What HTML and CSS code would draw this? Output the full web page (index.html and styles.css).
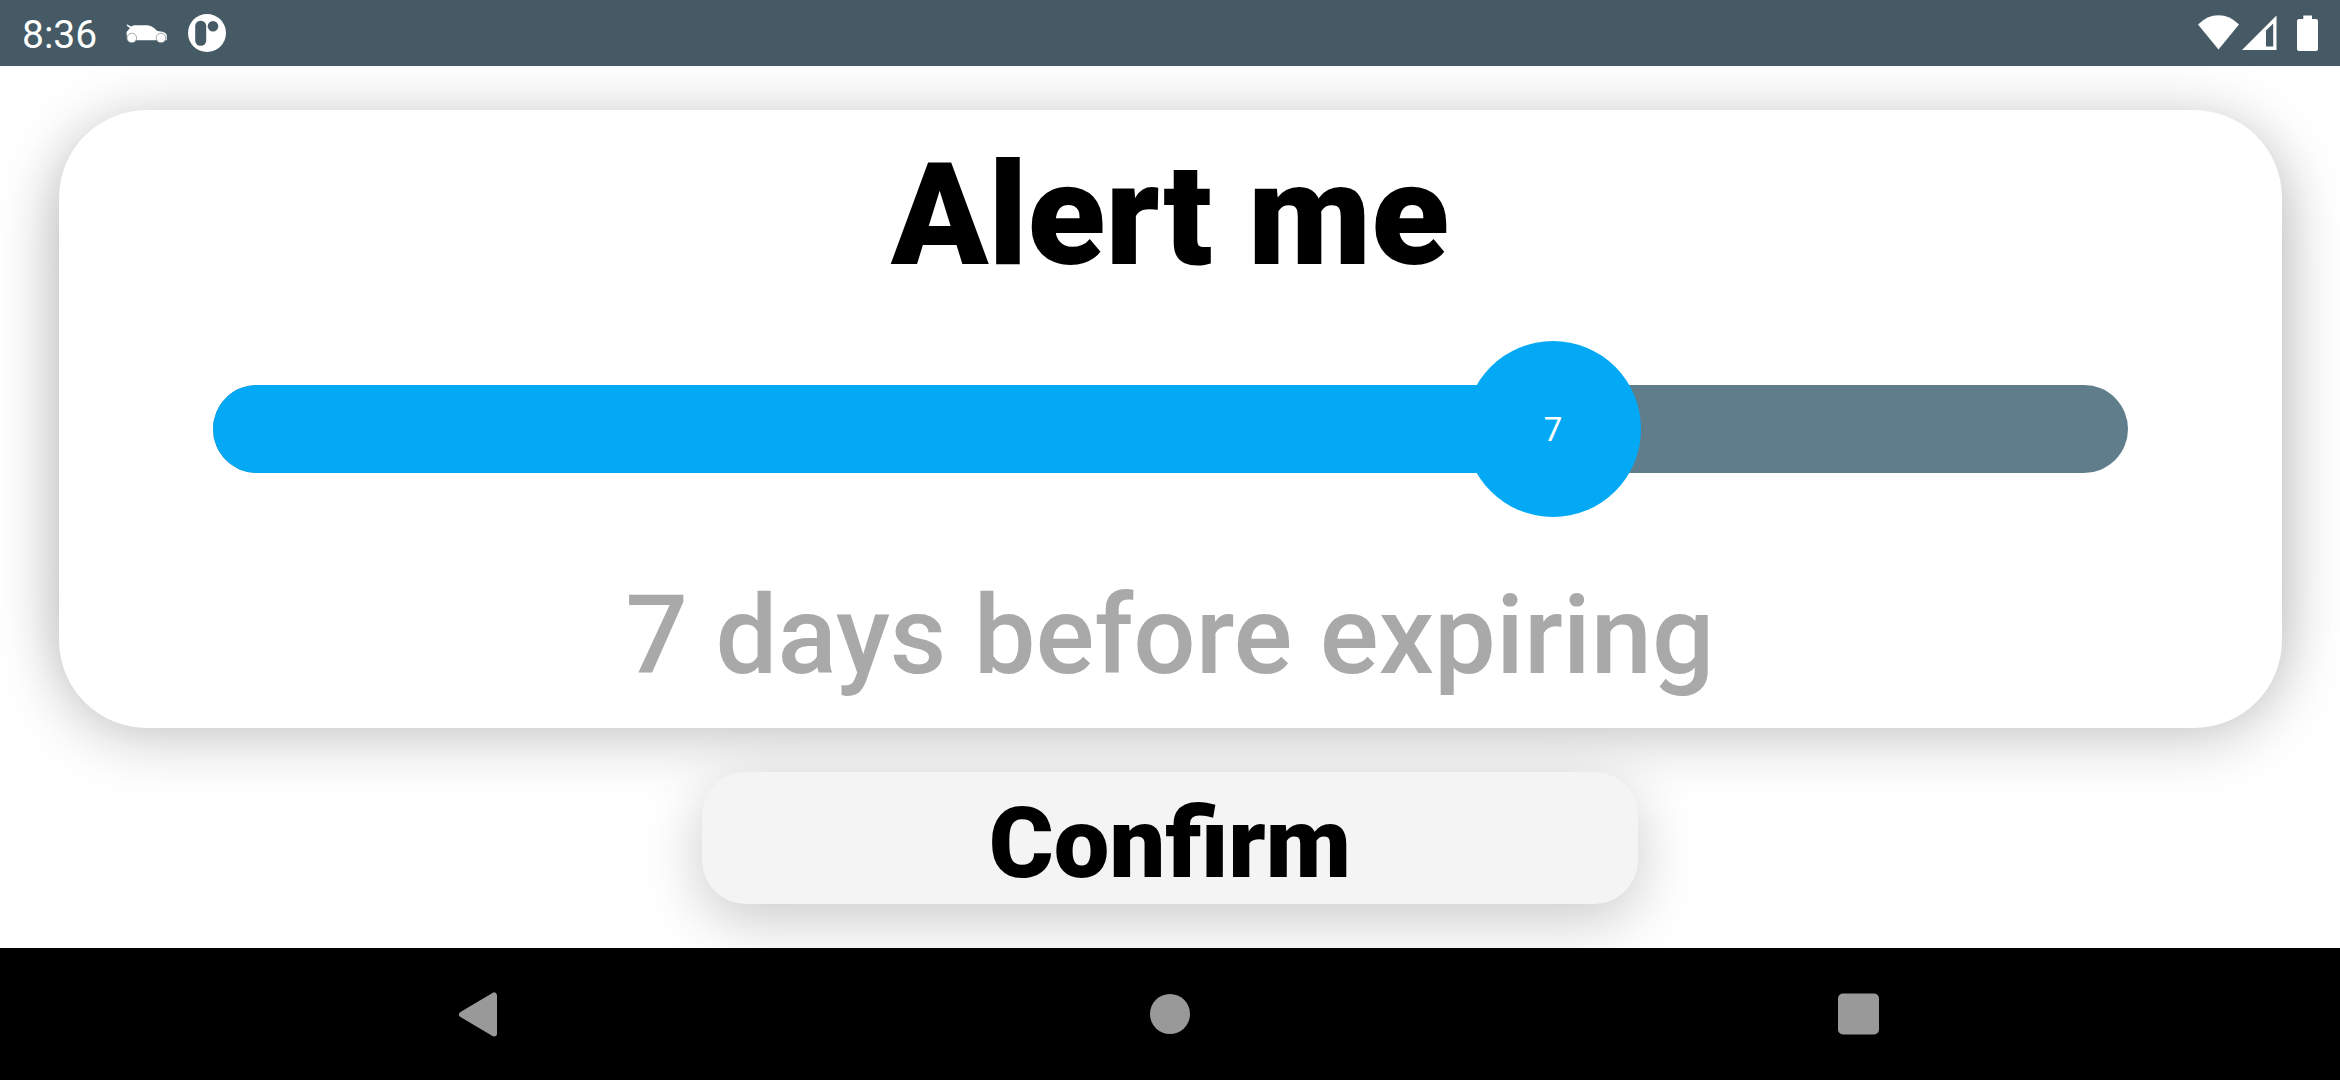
FILE: index.html
```html
<!DOCTYPE html>
<html lang="en">
<head>
    <meta charset="UTF-8">
    <meta name="viewport" content="width=device-width, initial-scale=1.0">
    <title>Alert me</title>
    <link rel="stylesheet" href="styles.css">
</head>
<body>
    <header class="status-bar">
        <div class="status-left">
            <span class="clock">8:36</span>
            <svg class="icon-car" width="42" height="20" viewBox="0 0 42 20">
                <path fill="#fff" d="M0.8 0.3L5 2.4L8 1.2H21C26 1.2 29 5 31.5 7C36 7.5 40.5 8 40.8 11.5V16.3H1L0.5 8L4 4L1 2Z"/>
                <circle cx="5.8" cy="14" r="4.8" fill="#fff" stroke="#455a64" stroke-width="0.5"/>
                <circle cx="35" cy="14" r="4.8" fill="#fff" stroke="#455a64" stroke-width="0.5"/>
            </svg>
            <svg class="icon-app" width="38" height="38" viewBox="0 0 38 38">
                <circle cx="19" cy="19" r="19" fill="#fff"/>
                <rect x="7.2" y="6.8" width="11" height="25" rx="5.2" fill="#455a64"/>
                <circle cx="25" cy="12.3" r="5.3" fill="#455a64"/>
            </svg>
        </div>
        <div class="status-right">
            <svg width="42" height="36" viewBox="0 0 42 36">
                <path fill="#fff" d="M0 9.5Q9 0.2 20.5 0.2T41 9.5L20.5 34.5Z"/>
            </svg>
            <svg class="icon-signal" width="35" height="36" viewBox="0 0 35 36">
                <path fill="#fff" fill-rule="evenodd" d="M0 35L34.5 0.5V35ZM24 15.5V31.5H31.2V8.5Z"/>
            </svg>
            <svg class="icon-battery" width="21" height="36" viewBox="0 0 21 36">
                <path fill="#fff" d="M6.3 0.5H15V4H19Q21 4 21 6V34Q21 36 19 36H2Q0 36 0 34V6Q0 4 2 4H6.3Z"/>
            </svg>
        </div>
    </header>

    <main class="content">
        <section class="card">
            <h1 class="title">Alert me</h1>
            <div class="slider">
                <div class="slider-fill" style="width: 70%"></div>
                <div class="slider-thumb" style="left: 70%">7</div>
            </div>
            <p class="summary">7 days before expiring</p>
        </section>
        <button type="button" class="confirm">Confirm</button>
    </main>

    <nav class="nav-bar">
        <div class="nav-item">
            <svg width="44" height="46" viewBox="0 0 44 46">
                <path fill="#999" stroke="#999" stroke-width="6" stroke-linejoin="round" d="M4 23.5L36 4.5V42.5Z"/>
            </svg>
        </div>
        <div class="nav-item">
            <svg width="40" height="40" viewBox="0 0 40 40">
                <circle cx="20" cy="20" r="20" fill="#999"/>
            </svg>
        </div>
        <div class="nav-item">
            <svg width="44" height="42" viewBox="0 0 44 42">
                <rect x="0" y="0.5" width="41" height="41" rx="5" fill="#999"/>
            </svg>
        </div>
    </nav>
</body>
</html>
```
FILE: styles.css
```css
* {
    box-sizing: border-box;
}
body {
    display: flex;
    flex-direction: column;
    height: 1080px;
    margin: 0;
    background-color: #fff;
    font-family: Roboto, sans-serif;
    overflow: hidden;
}
svg {
    display: block;
}

/* status bar */
.status-bar {
    display: flex;
    justify-content: space-between;
    height: 66px;
    padding: 0 22px;
    background-color: #455a64;
    color: #fff;
}
.status-left, .status-right {
    display: flex;
    align-items: center;
}
.clock {
    width: 104px;
    font-size: 39px;
    line-height: 66px;
    padding-top: 3px;
}
.icon-car {
    margin-top: 1px;
}
.icon-app {
    margin-left: 20px;
}
.icon-signal {
    margin-left: 2px;
}
.icon-battery {
    margin-left: 20px;
}

/* content */
.content {
    display: flex;
    flex-direction: column;
    align-items: center;
    gap: 44px;
    height: 882px;
    padding: 44px 0;
    overflow: hidden;
    isolation: isolate;
}
.card {
    position: relative;
    display: flex;
    flex-direction: column;
    align-items: center;
    width: 95%;
    height: 618px;
    padding-top: 21px;
    border-radius: 88px;
    background-color: #fff;
    box-shadow: 0 9px 62px rgba(0, 0, 0, 0.23);
}
/* deeper shadow on the left and right sides */
.card::before {
    content: "";
    position: absolute;
    inset: 35px 0;
    z-index: -1;
    border-radius: 88px;
    box-shadow: 0 0 60px rgba(0, 0, 0, 0.12);
}
.title {
    margin: 0;
    font-size: 143px;
    font-weight: 900;
    line-height: 168px;
}
.slider {
    position: relative;
    width: 1915px;
    height: 88px;
    margin-top: 86px;
    border-radius: 44px;
    background-color: #607d8b;
}
.slider-fill {
    height: 88px;
    border-radius: 44px 0 0 44px;
    background-color: #03a9f4;
}
.slider-thumb {
    position: absolute;
    top: -44px;
    width: 176px;
    height: 176px;
    margin-left: -88px;
    border-radius: 50%;
    background-color: #03a9f4;
    color: #fff;
    font-size: 33px;
    line-height: 177px;
    text-align: center;
}
.summary {
    margin: 98px 0 0;
    color: #a9a9a9;
    font-size: 110px;
    font-weight: 500;
    line-height: 129px;
}
.confirm {
    position: relative;
    width: 40%;
    height: 132px;
    padding: 5px 0 0;
    border: none;
    border-radius: 44px;
    background-color: #f4f4f4;
    box-shadow: 0 16px 60px rgba(0, 0, 0, 0.21);
    color: #000;
    font-family: inherit;
    font-size: 99px;
    font-weight: 900;
    line-height: 132px;
}

/* navigation bar */
.nav-bar {
    display: flex;
    justify-content: center;
    height: 132px;
    background-color: #000;
}
.nav-item {
    display: flex;
    align-items: center;
    justify-content: center;
    width: 690px;
}
```
